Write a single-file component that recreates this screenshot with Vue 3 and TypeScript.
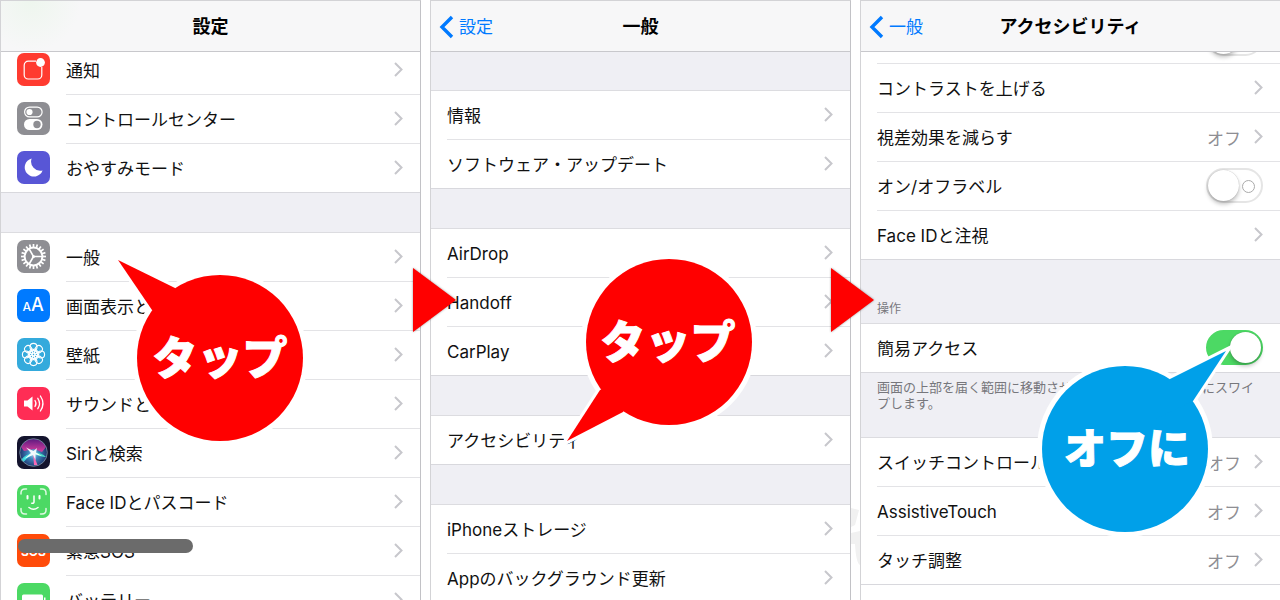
<script setup lang="ts">
interface Row {
  id?: string
  label: string
  icon?: string
  color?: string
  value?: string
  toggle?: boolean
}

const mainTop: Row[] = [
  { label: '通知', icon: 'notice', color: '#ff3b30' },
  { label: 'コントロールセンター', icon: 'control', color: '#8e8e93' },
  { label: 'おやすみモード', icon: 'moon', color: '#5856d6' },
]

const mainBottom: Row[] = [
  { label: '一般', icon: 'gear', color: '#8e8e93' },
  { label: '画面表示と明るさ', icon: 'display', color: '#007aff' },
  { label: '壁紙', icon: 'flower', color: '#34aadc' },
  { label: 'サウンドと触覚', icon: 'sound', color: '#ff2d55' },
  { label: 'Siriと検索', icon: 'siri', color: '#14142e' },
  { label: 'Face IDとパスコード', icon: 'face', color: '#4cd964' },
  { label: '緊急SOS', icon: 'sos', color: '#ff4b0a' },
  { label: 'バッテリー', icon: 'battery', color: '#4cd964' },
]

const generalGroups: Row[][] = [
  [{ label: '情報' }, { label: 'ソフトウェア・アップデート' }],
  [{ label: 'AirDrop' }, { label: 'Handoff' }, { label: 'CarPlay' }],
  [{ label: 'アクセシビリティ' }],
  [{ label: 'iPhoneストレージ' }, { label: 'Appのバックグラウンド更新' }],
]

const vision: Row[] = [
  { label: '', toggle: true },
  { label: 'コントラストを上げる' },
  { label: '視差効果を減らす', value: 'オフ' },
  { label: 'オン/オフラベル', toggle: true },
  { label: 'Face IDと注視' },
]

const controls: Row[] = [
  { label: 'スイッチコントロール', value: 'オフ' },
  { label: 'AssistiveTouch', value: 'オフ' },
  { label: 'タッチ調整', value: 'オフ' },
]

const petals = [0, 45, 90, 135, 180, 225, 270, 315]
const teeth = Array.from({ length: 20 }, (_, i) => i * 18)
</script>

<template>
  <main class="page">
    <section class="panel">
      <header class="bar tinted"><h1>設定</h1></header>
      <ul class="group first icons">
        <li v-for="row in mainTop" :key="row.label">
          <a href="#" class="row">
            <svg class="icon" viewBox="0 0 33 33" aria-hidden="true">
              <rect width="33" height="33" rx="7" :fill="row.color" />
              <g v-if="row.icon === 'notice'">
                <path d="M19 8.2H11.2A4 4 0 0 0 7.2 12.2V22A4 4 0 0 0 11.2 26H20.800A4 4 0 0 0 24.800 22V14" fill="none" stroke="#fff" stroke-width="1.200" />
                <circle cx="23.500" cy="9.500" r="4.400" fill="#fff" />
              </g>
              <g v-else-if="row.icon === 'control'">
                <rect x="7.600" y="5.100" width="17.500" height="9.800" rx="4.900" fill="none" stroke="#fff" stroke-width="1.200" />
                <circle cx="12.500" cy="10" r="3.100" fill="#fff" />
                <rect x="7" y="17" width="18.500" height="11" rx="5.500" fill="#fff" />
                <circle cx="20" cy="22.500" r="3.700" :fill="row.color" />
              </g>
              <path v-else d="M14.600 7.500A9.200 9.200 0 1 0 25.600 19.500A9.300 9.300 0 0 1 14.600 7.500Z" fill="#fff" />
            </svg>
            <span class="label">{{ row.label }}</span>
            <svg class="chevron" viewBox="0 0 9 15" aria-hidden="true"><path d="M1 1L7.500 7.500L1 14" /></svg>
          </a>
        </li>
      </ul>
      <ul class="group icons">
        <li v-for="row in mainBottom" :key="row.label">
          <a href="#" class="row">
            <svg class="icon" viewBox="0 0 33 33" aria-hidden="true">
              <rect width="33" height="33" rx="7" :fill="row.color" />
              <g v-if="row.icon === 'gear'" fill="none" stroke="#fff">
                <circle cx="16.500" cy="16.500" r="8.900" stroke-width="2" />
                <path v-for="a in teeth" :key="a" d="M16.500 4V7.500" stroke-width="1.700" :transform="`rotate(${a} 16.500 16.500)`" />
                <path d="M16.500 16.500H25M16.500 16.500L12.200 9M16.500 16.500L12.200 24" stroke-width="1.600" />
                <circle cx="16.500" cy="16.500" r="1.500" fill="#fff" stroke="none" />
              </g>
              <g v-else-if="row.icon === 'display'" fill="#fff" class="glyphs">
                <text x="5.500" y="22" font-size="12">A</text>
                <text x="14" y="22" font-size="18">A</text>
              </g>
              <g v-else-if="row.icon === 'flower'" fill="none" stroke="#fff" stroke-width="1.100">
                <circle v-for="a in petals" :key="a" cx="16.500" cy="8.900" r="3.500" :transform="`rotate(${a} 16.500 16.500)`" />
                <circle v-for="a in petals" :key="'i' + a" cx="16.500" cy="13.100" r="2.200" stroke-width="0.900" :transform="`rotate(${a + 22.5} 16.500 16.500)`" />
              </g>
              <g v-else-if="row.icon === 'sound'">
                <path d="M7 13.500H10.500L15.500 9.500V23.500L10.500 19.500H7Z" fill="#fff" />
                <path d="M18 13.500Q20 16.500 18 19.500M20.800 11.300Q24.200 16.500 20.800 21.700M23.400 9Q28.500 16.500 23.400 24" fill="none" stroke="#fff" stroke-width="1.300" stroke-linecap="round" />
              </g>
              <g v-else-if="row.icon === 'siri'">
                <defs>
                  <radialGradient id="siri-glow" cx="50%" cy="55%" r="55%">
                    <stop offset="0" stop-color="#a8dcf5" />
                    <stop offset="0.350" stop-color="#3f86bd" />
                    <stop offset="0.800" stop-color="#24427c" />
                    <stop offset="1" stop-color="#1b2150" />
                  </radialGradient>
                  <linearGradient id="siri-pink" x1="0" y1="0" x2="0" y2="1">
                    <stop offset="0" stop-color="#5d1a80" />
                    <stop offset="1" stop-color="#d63f9f" />
                  </linearGradient>
                </defs>
                <circle cx="16.500" cy="16.500" r="13.800" fill="url(#siri-glow)" />
                <path d="M4 11A13.800 13.800 0 0 1 29 11L25 16L17 13L7 15Z" fill="url(#siri-pink)" />
                <path d="M4 24Q9 17 17 17.500Q12 20 6.500 26Z" fill="#36d7dc" />
                <path d="M16.500 16.500Q24 16 29 21Q23 21.500 16.500 17.500Z" fill="#45d5c5" />
                <path d="M16 17L20.500 29L17 29Z" fill="#f569b5" />
                <path d="M9 11.500L16.500 15L20 12L19 16.500L25 20L18.500 18.500L18.500 24L16 19L7 23L14 17Z" fill="#fff" opacity="0.900" />
                <circle cx="16.500" cy="16.500" r="13.800" fill="none" stroke="#7f94a8" stroke-width="0.800" />
              </g>
              <g v-else-if="row.icon === 'face'" fill="none" stroke="#fff" stroke-width="1.500" stroke-linecap="round">
                <path d="M4 9V8Q4 4 8 4H9.500M23.500 4H25Q29 4 29 8V9.500M29 23.500V25Q29 29 25 29H23.500M9.500 29H8Q4 29 4 25V23.500" stroke="#dff8e3" />
                <path d="M10.500 11V13.500M22.500 11V13.500" stroke-width="2" />
                <path d="M17 11V17Q17 18.500 14.800 18.300M12 22.500Q16.500 26 21 22.500" />
              </g>
              <text v-else-if="row.icon === 'sos'" class="sos" x="16.500" y="22" text-anchor="middle" fill="#fff">SOS</text>
              <g v-else fill="#fff">
                <rect x="5" y="11.500" width="21" height="11" rx="1.500" />
                <path d="M27 14.500H28.500V19.500H27Z" />
              </g>
            </svg>
            <span class="label">{{ row.label }}</span>
            <svg class="chevron" viewBox="0 0 9 15" aria-hidden="true"><path d="M1 1L7.500 7.500L1 14" /></svg>
          </a>
        </li>
      </ul>

      <div class="strike"></div>
      <div class="bubble tap-general">
        <svg viewBox="0 0 200 200" aria-hidden="true">
          <circle cx="110" cy="110" r="85" class="edge" />
          <path d="M8 12L65 40L42 62Z" class="edge" />
          <circle cx="110" cy="110" r="83" fill="#f00" />
          <path d="M8 12L65 40L80 80L42 62Z" fill="#f00" />
        </svg>
        <strong>タップ</strong>
      </div>
      <svg class="arrow" viewBox="0 0 50 70" aria-hidden="true"><path d="M2 3L45 35L2 67Z" /></svg>
    </section>

    <section class="panel">
      <header class="bar">
        <a href="#" class="back">
          <svg viewBox="0 0 15 24" aria-hidden="true"><path d="M13 2L3 12L13 22" /></svg>設定
        </a>
        <h1>一般</h1>
      </header>
      <ul v-for="(group, i) in generalGroups" :key="i" class="group">
        <li v-for="row in group" :key="row.label">
          <a href="#" class="row">
            <span class="label">{{ row.label }}</span>
            <svg class="chevron" viewBox="0 0 9 15" aria-hidden="true"><path d="M1 1L7.500 7.500L1 14" /></svg>
          </a>
        </li>
      </ul>

      <div class="bubble tap-access">
        <svg viewBox="0 0 200 200" aria-hidden="true">
          <circle cx="110" cy="90" r="85" class="edge" />
          <path d="M8 189L41 138L64 160Z" class="edge" />
          <circle cx="110" cy="90" r="83" fill="#f00" />
          <path d="M8 189L41 138L80 120L64 160Z" fill="#f00" />
        </svg>
        <strong>タップ</strong>
      </div>
      <svg class="arrow second" viewBox="0 0 50 70" aria-hidden="true"><path d="M2 3L45 35L2 67Z" /></svg>
      <svg class="mark" viewBox="0 0 9 70" aria-hidden="true">
        <path d="M0 3L8 5L4 20L0 22ZM0 28L9 26V60Q5 58 4 39H0Z" />
      </svg>
    </section>

    <section class="panel">
      <header class="bar">
        <a href="#" class="back">
          <svg viewBox="0 0 15 24" aria-hidden="true"><path d="M13 2L3 12L13 22" /></svg>一般
        </a>
        <h1>アクセシビリティ</h1>
      </header>
      <ul class="group scrolled">
        <li v-for="(row, i) in vision" :key="i">
          <label v-if="row.toggle" class="row">
            <span class="label">{{ row.label }}</span>
            <input type="checkbox" class="switch" :aria-label="row.label || '表示'" />
          </label>
          <a v-else href="#" class="row">
            <span class="label">{{ row.label }}</span>
            <span v-if="row.value" class="value">{{ row.value }}</span>
            <svg class="chevron" viewBox="0 0 9 15" aria-hidden="true"><path d="M1 1L7.500 7.500L1 14" /></svg>
          </a>
        </li>
      </ul>
      <h2>操作</h2>
      <ul class="group joined">
        <li>
          <label class="row">
            <span class="label">簡易アクセス</span>
            <input type="checkbox" class="switch" checked />
          </label>
        </li>
      </ul>
      <p class="note">画面の上部を届く範囲に移動させるには画面の下端を下にスワイプします。</p>
      <ul class="group joined">
        <li v-for="row in controls" :key="row.label">
          <a href="#" class="row">
            <span class="label">{{ row.label }}</span>
            <span class="value">{{ row.value }}</span>
            <svg class="chevron" viewBox="0 0 9 15" aria-hidden="true"><path d="M1 1L7.500 7.500L1 14" /></svg>
          </a>
        </li>
      </ul>
      <div class="rest"></div>

      <div class="bubble turn-off">
        <svg viewBox="0 0 200 200" aria-hidden="true">
          <circle cx="90" cy="110" r="85" class="edge" />
          <path d="M191 12L135 40L158 62Z" class="edge" />
          <circle cx="90" cy="110" r="83" fill="#00a0e9" />
          <path d="M191 12L135 40L120 80L158 62Z" fill="#00a0e9" />
        </svg>
        <strong>オフに</strong>
      </div>
    </section>
  </main>
</template>

<style>
body {
  margin: 0;
  background: #fff;
}
</style>

<style scoped>
.page {
  display: grid;
  grid-template-columns: repeat(3, minmax(0, 1fr));
  gap: 9px;
  height: 100vh;
  margin-right: -1px;
  overflow: hidden;
  clip-path: inset(0);
  font-family: Inter, "Noto Sans CJK JP", sans-serif;
  font-size: 17px;
  color: #111;
}

.page,
.page * {
  box-sizing: border-box;
}

.panel {
  position: relative;
  min-height: 100vh;
  background: #efeff4;
  border: 1px solid #d3d3d6;
  border-right-color: #c2c2c6;
  border-bottom: 0;
}

a {
  color: inherit;
  text-decoration: none;
}

.bar {
  position: relative;
  z-index: 1;
  display: flex;
  align-items: center;
  justify-content: center;
  height: 51px;
  padding-top: 2px;
  background: #f7f7f8;
  border-bottom: 1px solid #c8c8cc;
}

.tinted {
  background: radial-gradient(circle at 30px 0, #eef6ee, #f7f7f8 50px);
}

h1 {
  margin: 0;
  font-size: 18px;
  font-weight: 700;
  line-height: 24px;
  color: #000;
}

.back {
  position: absolute;
  left: 8px;
  display: flex;
  align-items: center;
  gap: 5px;
  line-height: 24px;
  color: #007aff;
}

.back svg {
  width: 15px;
  height: 24px;
  fill: none;
  stroke: #007aff;
  stroke-width: 3.400;
}

.group {
  margin: 38px 0 0;
  padding: 0;
  list-style: none;
  background: #fff;
  border-top: 1px solid #dcdce0;
}

.group + .group {
  margin-top: 39px;
}

.group.first {
  margin-top: -7px;
}

.group.scrolled {
  margin-top: -38px;
}

.group.joined {
  margin-top: 0;
}

.row {
  display: flex;
  align-items: center;
  height: 49px;
  padding: 0 17px 0 16px;
  background: linear-gradient(#e3e3e6, #e3e3e6) 16px 100% / 100% 1px no-repeat;
}

.icons .row {
  background-position-x: 65px;
}

.group li:last-child .row {
  background-position-x: 0;
  background-image: linear-gradient(#d8d8dd, #d8d8dd);
}

.icon {
  flex: none;
  width: 33px;
  height: 33px;
  margin: 0 16px 2px 0;
}

.glyphs {
  font-family: Inter, sans-serif;
  font-weight: 500;
}

.sos {
  font-size: 12px;
  font-weight: 700;
}

.label {
  flex: 1;
  line-height: 24px;
  white-space: nowrap;
}

.value {
  margin-right: 13px;
  color: #8e8e93;
}

.chevron {
  flex: none;
  width: 9px;
  height: 15px;
  margin-bottom: 2px;
  fill: none;
  stroke: #c7c7cc;
  stroke-width: 2;
}

.switch {
  appearance: none;
  position: relative;
  flex: none;
  width: 57px;
  height: 35px;
  margin: 0 0 2px;
  background: #fff;
  border: 2px solid #e5e5e5;
  border-radius: 18px;
}

.switch::before {
  content: "";
  position: absolute;
  top: 0;
  left: 0;
  width: 31px;
  height: 31px;
  background: #fff;
  border-radius: 50%;
  box-shadow: 0 3px 4px rgba(0, 0, 0, 0.25), 0 0 1px rgba(0, 0, 0, 0.3);
}

.switch::after {
  content: "";
  position: absolute;
  top: 10px;
  right: 6px;
  width: 11px;
  height: 11px;
  border: 1px solid #aaa;
  border-radius: 50%;
}

.switch:checked {
  background: #4cd964;
  border-color: #4cd964;
}

.switch:checked::before {
  left: 22px;
}

.switch:checked::after {
  display: none;
}

h2 {
  margin: 0;
  padding: 41px 16px 6px;
  font-size: 12px;
  font-weight: 400;
  line-height: 16px;
  color: #77777c;
}

.note {
  margin: 0;
  padding: 6px 20px 26px 16px;
  font-size: 13px;
  line-height: 16px;
  color: #77777c;
}

.rest {
  height: 49px;
  background: #fff;
}

.bubble {
  position: absolute;
  z-index: 3;
  width: 200px;
  height: 200px;
  color: #fff;
}

.bubble svg {
  display: block;
  width: 200px;
  height: 200px;
}

.edge {
  fill: #fff;
  stroke: #fff;
  stroke-width: 6;
}

.bubble strong {
  position: absolute;
  width: 166px;
  font-size: 45px;
  font-weight: 900;
  line-height: 60px;
  text-align: center;
  white-space: nowrap;
  -webkit-text-stroke: 1px #fff;
}

.tap-general {
  top: 247px;
  left: 109px;
}

.tap-general strong {
  top: 81px;
  left: 27px;
}

.tap-access {
  top: 251px;
  left: 128px;
}

.tap-access strong {
  top: 61px;
  left: 26px;
}

.turn-off {
  top: 338px;
  left: 174px;
}

.turn-off strong {
  top: 80px;
  left: 9px;
  font-size: 42px;
}

.arrow {
  position: absolute;
  z-index: 4;
  top: 264px;
  right: -41px;
  width: 50px;
  height: 70px;
  fill: #f00;
  filter: drop-shadow(0 0 1px rgba(0, 0, 0, 0.4));
}

.arrow.second {
  right: -29px;
}

.mark {
  position: absolute;
  top: 504px;
  right: -10px;
  width: 9px;
  height: 70px;
  fill: #f1f1f1;
}

.strike {
  position: absolute;
  z-index: 2;
  top: 538px;
  left: 17px;
  width: 175px;
  height: 14px;
  background: #6b6b6b;
  border-radius: 7px;
}
</style>
